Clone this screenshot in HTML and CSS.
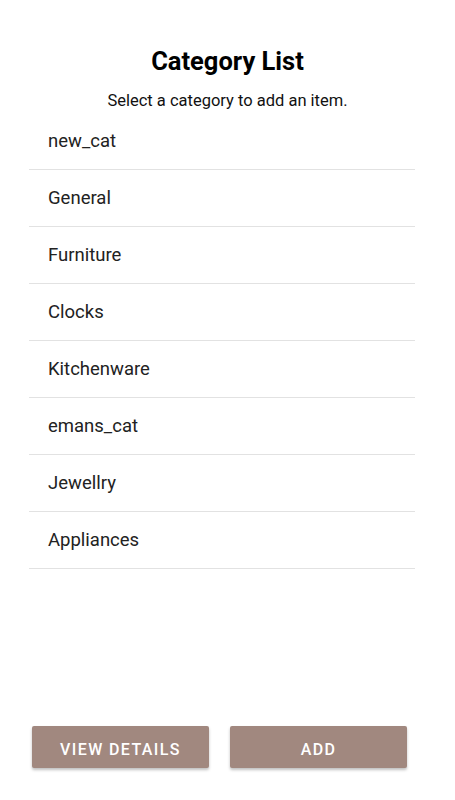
FILE: index.html
```html
<!DOCTYPE html>
<html>
<head>
<meta charset="utf-8">
<link rel="stylesheet" href="styles.css">
</head>
<body>
<div class="screen">
  <header class="head">
    <h1 class="title">Category List</h1>
    <p class="subtitle">Select a category to add an item.</p>
  </header>
  <ul class="list">
    <li class="row">new_cat</li>
    <li class="row">General</li>
    <li class="row">Furniture</li>
    <li class="row">Clocks</li>
    <li class="row">Kitchenware</li>
    <li class="row">emans_cat</li>
    <li class="row">Jewellry</li>
    <li class="row">Appliances</li>
  </ul>
  <div class="actions">
    <button class="btn">VIEW DETAILS</button>
    <button class="btn">ADD</button>
  </div>
</div>
</body>
</html>
```
FILE: styles.css
```css
html, body {
  margin: 0;
  padding: 0;
  background: #ffffff;
}
body {
  font-family: Roboto, "Liberation Sans", sans-serif;
  color: #212121;
}
.screen {
  height: 800px;
  display: flex;
  flex-direction: column;
  box-sizing: border-box;
}
.head {
  padding-top: 45px;
  text-align: center;
}
.title {
  margin: 0;
  font-size: 25.5px;
  line-height: 32px;
  font-weight: 700;
  color: #000;
}
.subtitle {
  margin: 14px 0 0;
  font-size: 16.5px;
  line-height: 20px;
  color: #111;
}
.list {
  list-style: none;
  margin: 2px 40px 0 29px;
  padding: 0;
}
.row {
  height: 56px;
  border-bottom: 1px solid #e2e2e2;
  padding-left: 19px;
  display: flex;
  align-items: center;
  font-size: 18.5px;
  color: #222;
}
.actions {
  margin-top: auto;
  padding: 0 48px 32px 32px;
  display: flex;
  gap: 21px;
}
.btn {
  width: 177px;
  height: 42px;
  border: none;
  border-radius: 2px;
  background: #a1887f;
  color: #fff;
  font-family: Roboto, "Liberation Sans", sans-serif;
  font-weight: 500;
  font-size: 16px;
  letter-spacing: 1.4px;
  box-shadow: 0 2px 3px rgba(0,0,0,0.25);
  padding: 4px 0 0;
}
```
